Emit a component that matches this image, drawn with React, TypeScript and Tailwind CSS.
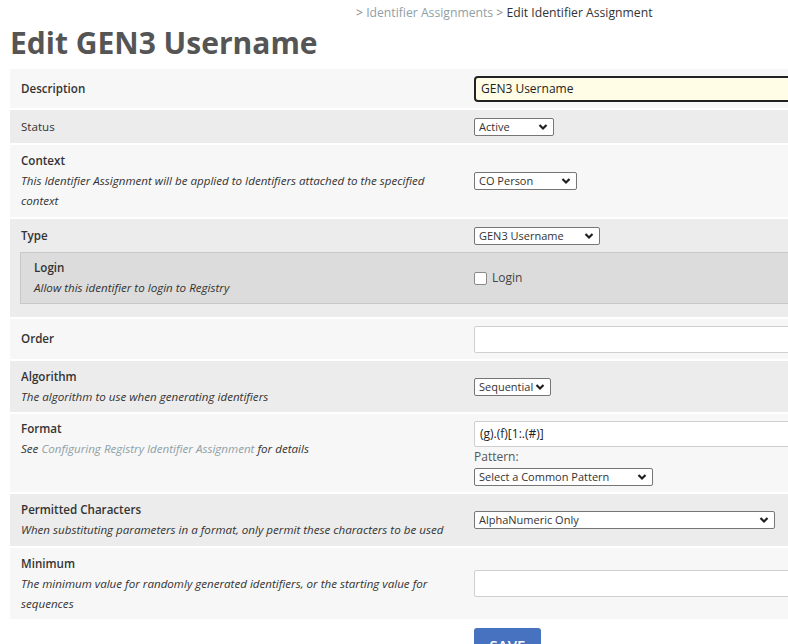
import React from "react";

function Chevron() {
  return (
    <svg width="10" height="7" viewBox="0 0 10 7" className="pointer-events-none absolute right-[6px] top-1/2 -translate-y-1/2">
      <path d="M1.5 1.5 5 5 8.5 1.5" fill="none" stroke="#1f1f1f" strokeWidth="2.2" />
    </svg>
  );
}

function Select({ value, width }: { value: string; width: string }) {
  return (
    <div className={`relative ${width}`}>
      <select className="block h-[18px] w-full appearance-none rounded-[2px] border border-[#767676] bg-white pl-[4px] pr-[14px] text-[11px] leading-[16px] text-[#333] outline-none">
        <option>{value}</option>
      </select>
      <Chevron />
    </div>
  );
}

function Row({
  label,
  desc,
  dark,
  semibold = true,
  top,
  className,
  children,
}: {
  label: string;
  desc?: React.ReactNode;
  dark?: boolean;
  semibold?: boolean;
  top?: boolean;
  className: string;
  children?: React.ReactNode;
}) {
  return (
    <div className={`flex items-center ${dark ? "bg-[#ececec]" : "bg-[#f7f7f7]"} ${className}`}>
      <div className={`w-[464px] shrink-0 px-[11px] ${top ? "self-start pt-[5px]" : ""}`}>
        <div className={`text-[11.6px] leading-[20px] text-[#333] ${semibold ? "font-semibold" : ""}`}>{label}</div>
        {desc && <div className="text-[11.6px] italic leading-[20px] text-[#333]">{desc}</div>}
      </div>
      <div className="flex flex-1 flex-col py-[6px]">{children}</div>
    </div>
  );
}

export default function App() {
  return (
    <div className="h-[644px] w-[788px] overflow-hidden bg-white font-['Open_Sans',sans-serif] text-[#333]">
      <div className="pl-[356px] pt-[3px] text-[12.2px] leading-[20px]">
        <span className="text-[#888]">&gt; </span>
        <a className="text-[#8fa0a6]">Identifier Assignments</a>
        <span className="text-[#888]"> &gt; </span>
        <span className="text-[#333]">Edit Identifier Assignment</span>
      </div>
      <h1 className="mt-[2px] pl-[10px] text-[30px] font-bold leading-[36px] text-[#555]">Edit GEN3 Username</h1>

      <div className="mt-[8px] flex w-[840px] flex-col gap-[2px] pl-[10px]">
        <Row label="Description" className="min-h-[39px]">
          <input
            defaultValue="GEN3 Username"
            className="h-[26px] w-full rounded-[4px] border-2 border-[#222] bg-[#fffde6] px-[5px] text-[12px] text-[#222] outline-none"
          />
        </Row>

        <Row label="Status" dark semibold={false} className="min-h-[33px]">
          <Select value="Active" width="w-[80px]" />
        </Row>

        <Row
          label="Context"
          desc={
            <>
              This Identifier Assignment will be applied to Identifiers attached to the specified
              <br />
              context
            </>
          }
          className="min-h-[72px]"
        >
          <Select value="CO Person" width="w-[103px]" />
        </Row>

        <div className="flex flex-col bg-[#ececec] pb-[13px]">
          <div className="flex h-[33px] items-center">
            <div className="w-[464px] shrink-0 px-[11px] text-[11.6px] font-semibold leading-[20px]">Type</div>
            <Select value="GEN3 Username" width="w-[126px]" />
          </div>
          <div className="ml-[10px] flex h-[52px] items-center border border-[#c8c8c8] bg-[#dcdcdc]">
            <div className="w-[453px] shrink-0 px-[13px]">
              <div className="text-[11.6px] font-semibold leading-[20px]">Login</div>
              <div className="text-[11.6px] italic leading-[20px]">Allow this identifier to login to Registry</div>
            </div>
            <label className="flex items-center gap-[5px] text-[12px] leading-[20px] text-[#444]">
              <input
                type="checkbox"
                className="h-[13px] w-[13px] appearance-none rounded-[2px] border border-[#8a8a8a] bg-white"
              />
              Login
            </label>
          </div>
        </div>

        <Row label="Order" className="min-h-[40px]">
          <input className="h-[27px] w-full rounded-[2px] border border-[#cfcfcf] bg-white outline-none" />
        </Row>

        <Row label="Algorithm" desc="The algorithm to use when generating identifiers" dark className="min-h-[51px]">
          <Select value="Sequential" width="w-[77px]" />
        </Row>

        <Row
          label="Format"
          top
          desc={
            <>
              See <a className="text-[#8fa0a6]">Configuring Registry Identifier Assignment</a> for details
            </>
          }
          className="min-h-[78px]"
        >
          <input
            defaultValue="(g).(f)[1:.(#)]"
            className="h-[26px] w-full rounded-[2px] border border-[#cfcfcf] bg-white px-[5px] text-[12px] text-[#222] outline-none"
          />
          <div className="mt-[1px] text-[12px] leading-[18px] text-[#555]">Pattern:</div>
          <div className="mt-[2px]">
            <Select value="Select a Common Pattern" width="w-[179px]" />
          </div>
        </Row>

        <Row
          label="Permitted Characters"
          desc="When substituting parameters in a format, only permit these characters to be used"
          dark
          className="min-h-[52px]"
        >
          <Select value="AlphaNumeric Only" width="w-[301px]" />
        </Row>

        <Row
          label="Minimum"
          desc={
            <>
              The minimum value for randomly generated identifiers, or the starting value for
              <br />
              sequences
            </>
          }
          className="min-h-[71px]"
        >
          <input className="h-[27px] w-full rounded-[2px] border border-[#cfcfcf] bg-white outline-none" />
        </Row>

        <div className="mt-[7px] flex">
          <div className="w-[464px] shrink-0" />
          <button className="h-[34px] w-[67px] rounded-[3px] bg-[#4672bf] text-[15px] font-semibold text-white">SAVE</button>
        </div>
      </div>
    </div>
  );
}
